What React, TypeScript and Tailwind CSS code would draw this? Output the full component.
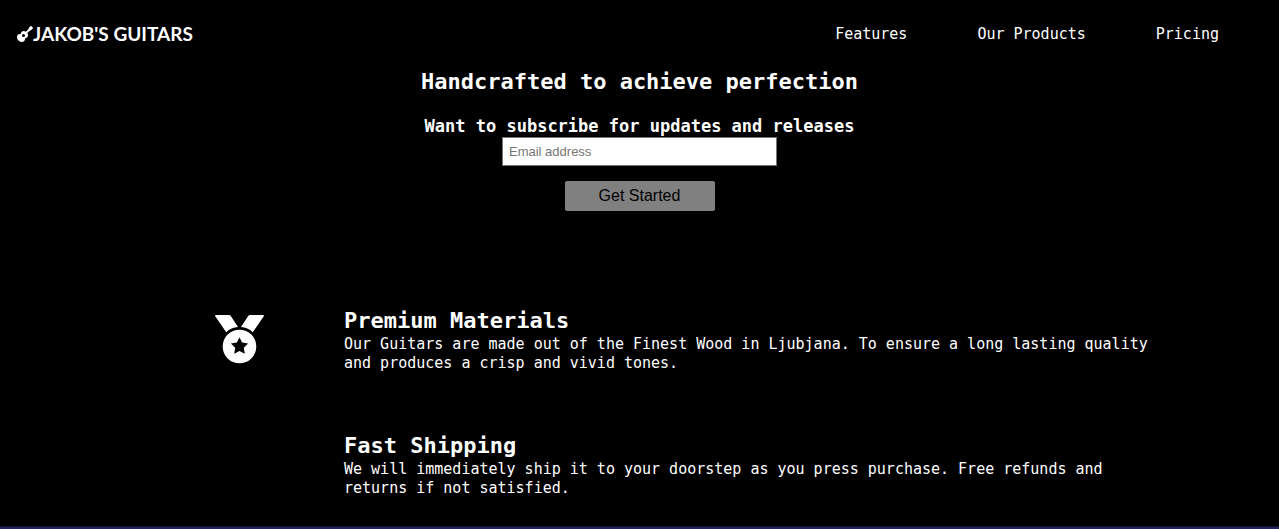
import type { ReactNode } from "react";
import { FaGuitar } from "react-icons/fa6";

const links = [
  { label: "Features", href: "#features" },
  { label: "Our Products", href: "#products" },
  { label: "Pricing", href: "#pricing" },
];

function MedalIcon() {
  return (
    <svg viewBox="0 0 49 49" className="size-[49px]" fill="currentColor" aria-hidden="true">
      <path d="M1 0H14.2Q15.2 0 15.8 .9L23 12Q16.2 12.5 11.2 17.2L.4 1.6Q-.4 0 1 0Z" />
      <path d="M48 0H34.8Q33.8 0 33.2 .9L26 12Q32.8 12.5 37.8 17.2L48.6 1.6Q49.4 0 48 0Z" />
      <path
        fillRule="evenodd"
        d="M24.5 14.7a16.8 16.8 0 1 0 0 33.6a16.8 16.8 0 1 0 0-33.6ZM24.5 22.2L27.1 27.6L33.1 28.5L28.8 32.7L29.8 38.7L24.5 35.9L19.2 38.7L20.2 32.7L15.9 28.5L21.9 27.6Z"
      />
    </svg>
  );
}

function Feature({ title, icon, children }: { title: string; icon?: ReactNode; children: ReactNode }) {
  return (
    <div className="grid grid-cols-[129px_1fr]">
      <div className="pt-2">{icon}</div>
      <div>
        <h2 className="text-[22px] leading-7 font-bold">{title}</h2>
        <p className="text-[15px] leading-[19px]">{children}</p>
      </div>
    </div>
  );
}

export default function App() {
  return (
    <div className="flex min-h-screen flex-col bg-black font-['DejaVu_Sans_Mono',monospace] text-white">
      <header className="flex h-17 items-center justify-between pr-[60px] pl-[17px]">
        <a href="#" className="flex items-center font-['Lato',sans-serif] text-[19px] leading-6 font-bold">
          <FaGuitar size={16} aria-hidden="true" />
          JAKOB'S GUITARS
        </a>
        <nav>
          <ul className="flex gap-[70px] text-[15px] leading-[19px]">
            {links.map((link) => (
              <li key={link.label}>
                <a href={link.href}>{link.label}</a>
              </li>
            ))}
          </ul>
        </nav>
      </header>

      <main className="flex-1">
        <section className="flex flex-col items-center">
          <h1 className="text-[22px] leading-7 font-bold">Handcrafted to achieve perfection</h1>
          <form className="flex flex-col items-center pt-[19px]" onSubmit={(e) => e.preventDefault()}>
            <label htmlFor="email" className="text-[17px] leading-[22px] font-bold">
              Want to subscribe for updates and releases
            </label>
            <input
              id="email"
              type="email"
              placeholder="Email address"
              className="h-[29px] w-[275px] border border-[#767676] bg-white px-[6px] font-['Liberation_Sans',sans-serif] text-[13px] text-black placeholder:text-[#757575]"
            />
            <button
              type="submit"
              className="mt-[15px] h-[30px] w-[150px] rounded-xs bg-[#808080] font-['Liberation_Sans',sans-serif] text-base text-black"
            >
              Get Started
            </button>
          </form>
        </section>

        <section id="features" className="flex flex-col gap-[59px] pt-24 pr-[130px] pb-7 pl-[215px]">
          <Feature title="Premium Materials" icon={<MedalIcon />}>
            Our Guitars are made out of the Finest Wood in Ljubjana. To ensure a long lasting quality and produces a
            crisp and vivid tones.
          </Feature>
          <Feature title="Fast Shipping">
            We will immediately ship it to your doorstep as you press purchase. Free refunds and returns if not
            satisfied.
          </Feature>
        </section>
      </main>

      <footer className="h-[3px] border-t border-[#15153a] bg-[#22225a]" />
    </div>
  );
}
